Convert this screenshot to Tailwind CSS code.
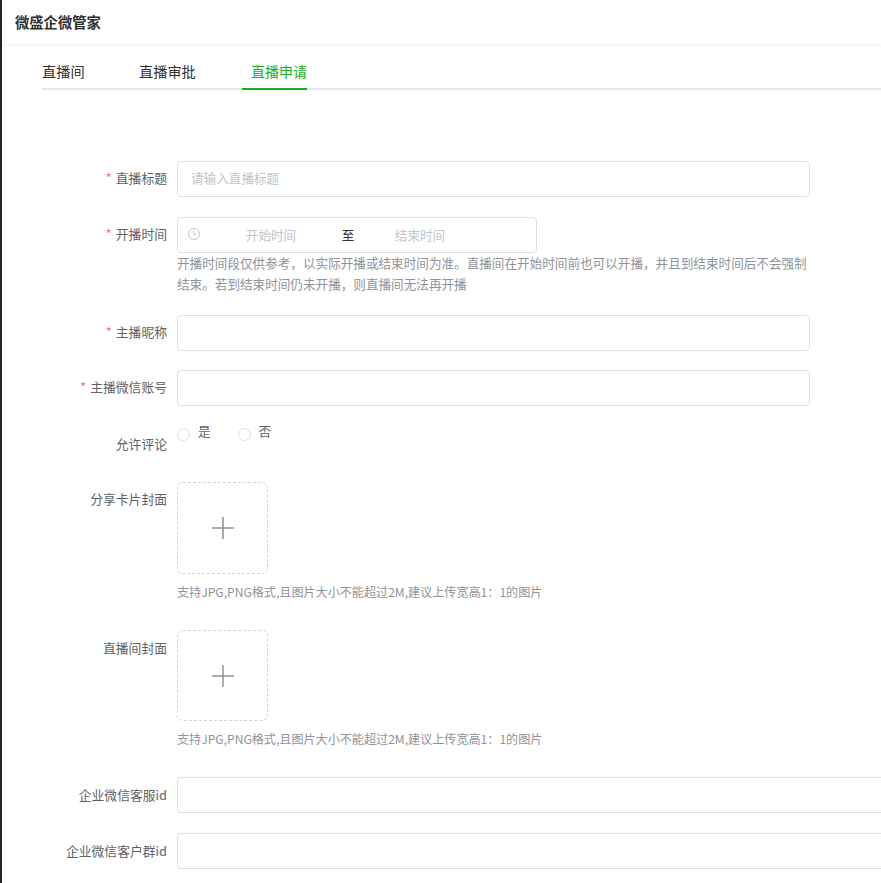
<!DOCTYPE html>
<html lang="zh-CN">
<head>
    <meta charset="UTF-8">
    <title>直播申请</title>
    <script src="https://cdn.jsdelivr.net/npm/@tailwindcss/browser@4"></script>
</head>
<body class="bg-white h-[883px] overflow-hidden font-['Noto_Sans_CJK_SC','Liberation_Sans',sans-serif] text-[12.6px] text-[#606266]">
<div class="flex h-full">
    <div class="w-[2px] shrink-0 bg-[#24242c]"></div>
    <div class="flex-1 min-w-0">
        <!-- header -->
        <div class="h-[44px] pl-[13px] flex items-center bg-white shadow-[0_1px_4px_rgba(0,0,0,0.06)] text-[14.3px] font-semibold text-[#303133]">微盛企微管家</div>

        <!-- tabs -->
        <div class="ml-[40px] h-[46px] flex border-b-2 border-[#e4e7ed] text-[14.2px] text-[#303133] whitespace-nowrap">
            <div class="h-[46px] pt-[16px] leading-[22px] w-[97px]">直播间</div>
            <div class="h-[46px] pt-[16px] leading-[22px] w-[103px]">直播审批</div>
            <div class="h-[46px] pt-[16px] leading-[22px] w-[65px] pl-[9px] text-[14px] text-[#1aad19] border-b-2 border-[#1aad19]">直播申请</div>
        </div>

        <!-- form -->
        <div class="pt-[71px]">
            <div class="flex h-[36px]">
                <div class="w-[175px] pr-[10px] text-right text-[12.8px] leading-[34px]"><span class="text-[#f56c6c] mr-[4px]">*</span>直播标题</div>
                <div class="w-[633px] h-[36px] px-[13px] border border-[#dcdfe6] rounded-[4px] leading-[31px] text-[#c0c4cc]">请输入直播标题</div>
            </div>

            <div class="flex mt-[20px]">
                <div class="w-[175px] pr-[10px] text-right text-[12.8px] leading-[33px]"><span class="text-[#f56c6c] mr-[4px]">*</span>开播时间</div>
                <div class="w-[632px]">
                    <div class="w-[360px] h-[36px] flex items-center border border-[#dcdfe6] rounded-[4px] text-[#c0c4cc]">
                        <svg class="ml-[10px] shrink-0 -mt-[2px]" width="12" height="12" viewBox="0 0 12 12" fill="none" stroke="#c0c4cc" stroke-width="1"><circle cx="6" cy="6" r="5.5"/><path d="M6 2.8V6.3H8.6"/></svg>
                        <span class="w-[134px] ml-[4px] text-center">开始时间</span>
                        <span class="w-[20px] text-center text-[#303133]">至</span>
                        <span class="w-[124px] text-center">结束时间</span>
                    </div>
                    <p class="leading-[21px] text-[#909399] -mt-[1px] pb-[1px]">开播时间段仅供参考，以实际开播或结束时间为准。直播间在开始时间前也可以开播，并且到结束时间后不会强制结束。若到结束时间仍未开播，则直播间无法再开播</p>
                </div>
            </div>

            <div class="flex h-[36px] mt-[20px]">
                <div class="w-[175px] pr-[10px] text-right text-[12.8px] leading-[34px]"><span class="text-[#f56c6c] mr-[4px]">*</span>主播昵称</div>
                <div class="w-[633px] h-[36px] border border-[#dcdfe6] rounded-[4px]"></div>
            </div>

            <div class="flex h-[36px] mt-[19px]">
                <div class="w-[175px] pr-[10px] text-right text-[12.8px] leading-[34px]"><span class="text-[#f56c6c] mr-[4px]">*</span>主播微信账号</div>
                <div class="w-[633px] h-[36px] border border-[#dcdfe6] rounded-[4px]"></div>
            </div>

            <div class="flex h-[36px] mt-[20px]">
                <div class="w-[175px] pr-[10px] text-right text-[12.8px] leading-[36px]">允许评论</div>
                <div class="flex items-start leading-[10px]">
                    <div class="mt-[2px] w-[13px] h-[13px] rounded-full border border-[#dcdfe6]"></div>
                    <span class="ml-[8px]">是</span>
                    <div class="ml-[27px] mt-[2px] w-[13px] h-[13px] rounded-full border border-[#dcdfe6]"></div>
                    <span class="ml-[8px]">否</span>
                </div>
            </div>

            <div class="flex mt-[20px]">
                <div class="w-[175px] pr-[10px] text-right text-[12.8px] leading-[34px]">分享卡片封面</div>
                <div>
                    <div class="w-[91px] h-[92px] flex items-center justify-center border border-dashed border-[#d4d4d8] rounded-[6px]">
                        <svg width="22" height="22" viewBox="0 0 22 22" stroke="#8c939d" stroke-width="1.5"><path d="M0 11H22M11 0V22"/></svg>
                    </div>
                    <p class="mt-[9px] text-[12.1px] leading-[18px] text-[#909399]">支持JPG,PNG格式,且图片大小不能超过2M,建议上传宽高1：1的图片</p>
                </div>
            </div>

            <div class="flex mt-[29px]">
                <div class="w-[175px] pr-[10px] text-right text-[12.8px] leading-[36px]">直播间封面</div>
                <div>
                    <div class="w-[91px] h-[91px] flex items-center justify-center border border-dashed border-[#d4d4d8] rounded-[6px]">
                        <svg width="22" height="22" viewBox="0 0 22 22" stroke="#8c939d" stroke-width="1.5"><path d="M0 11H22M11 0V22"/></svg>
                    </div>
                    <p class="mt-[9px] text-[12.1px] leading-[18px] text-[#909399]">支持JPG,PNG格式,且图片大小不能超过2M,建议上传宽高1：1的图片</p>
                </div>
            </div>

            <div class="flex h-[36px] mt-[29px]">
                <div class="w-[175px] pr-[10px] text-right text-[12.8px] leading-[36px]">企业微信客服id</div>
                <div class="flex-1 h-[36px] border border-r-0 border-[#dcdfe6] rounded-l-[4px]"></div>
            </div>

            <div class="flex h-[36px] mt-[20px]">
                <div class="w-[175px] pr-[10px] text-right text-[12.8px] leading-[36px]">企业微信客户群id</div>
                <div class="flex-1 h-[36px] border border-r-0 border-[#dcdfe6] rounded-l-[4px]"></div>
            </div>
        </div>
    </div>
</div>
</body>
</html>
